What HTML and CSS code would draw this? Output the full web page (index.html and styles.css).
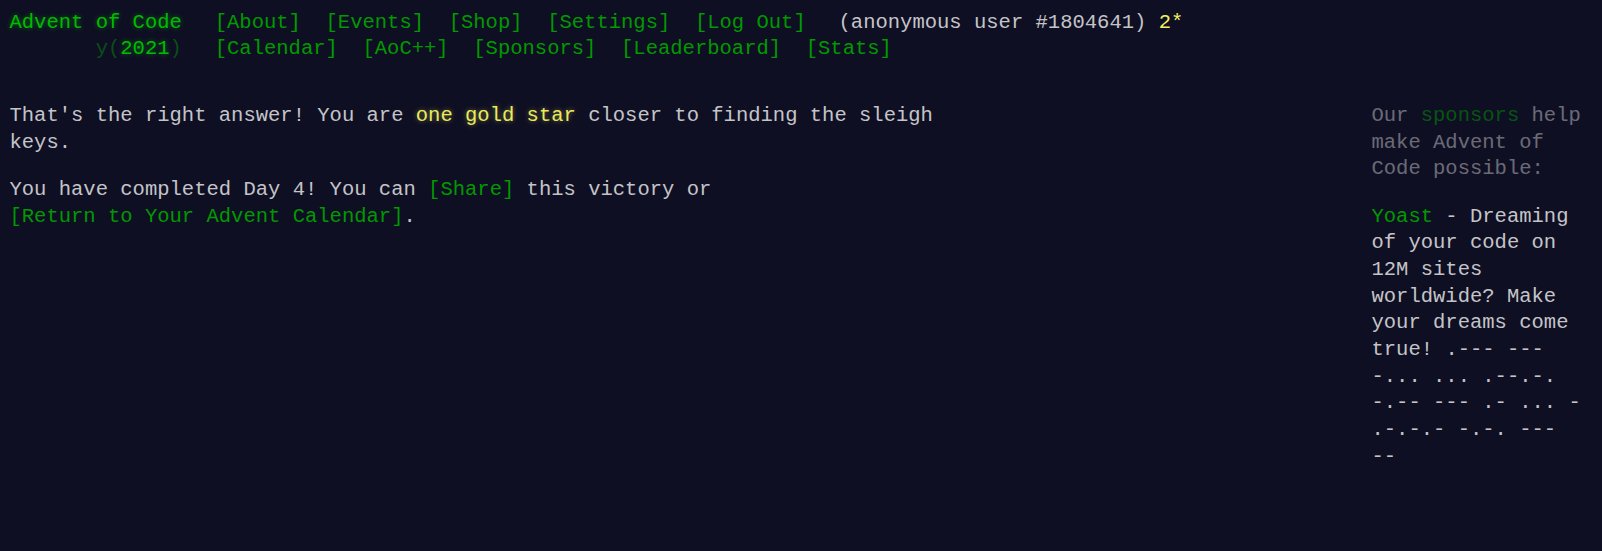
FILE: index.html
```html
<!DOCTYPE html>
<html lang="en">
<head>
<meta charset="utf-8">
<title>Day 4 - Advent of Code 2021</title>
<link rel="stylesheet" href="styles.css">
</head>
<body>
<header>
  <div class="row">
    <h1 class="title-global"><a href="#">Advent of Code</a></h1>
    <nav>
      <ul><li><a href="#">[About]</a></li><li><a href="#">[Events]</a></li><li><a href="#">[Shop]</a></li><li><a href="#">[Settings]</a></li><li><a href="#">[Log Out]</a></li></ul>
    </nav>
    <div class="user">(anonymous user #1804641) <span class="star-count">2*</span></div>
  </div>
  <div class="row">
    <h1 class="title-event">&nbsp;&nbsp;&nbsp;&nbsp;&nbsp;&nbsp;&nbsp;<span class="title-event-wrap">y(</span><a href="#">2021</a><span class="title-event-wrap">)</span></h1>
    <nav>
      <ul><li><a href="#">[Calendar]</a></li><li><a href="#">[AoC++]</a></li><li><a href="#">[Sponsors]</a></li><li><a href="#">[Leaderboard]</a></li><li><a href="#">[Stats]</a></li></ul>
    </nav>
  </div>
</header>
<main class="page">
  <article class="content">
    <p>That's the right answer! You are <span class="star">one gold star</span> closer to finding the sleigh keys.</p>
    <p>You have completed Day 4! You can <span class="share">[Share]</span> this victory or <a class="return" href="#">[Return to Your Advent Calendar]</a>.</p>
  </article>
  <aside class="sidebar">
    <div class="quiet">Our <a href="#">sponsors</a> help make Advent of Code possible:</div>
    <div class="sponsor"><a href="#">Yoast</a> - Dreaming of your code on 12M sites worldwide? Make your dreams come true! <span class="morse">.---</span> <span class="morse">---</span> <span class="morse">-...</span> <span class="morse">...</span> <span class="morse">.--.-.</span> <span class="morse">-.--</span> <span class="morse">---</span> <span class="morse">.-</span> <span class="morse">...</span> <span class="morse">-</span> <span class="morse">.-.-.-</span> <span class="morse">-.-.</span> <span class="morse">---</span> <span class="morse">--</span></div>
  </aside>
</main>
</body>
</html>
```
FILE: styles.css
```css
html, body {
  background: #0f0f23;
}

body {
  margin: 0;
  padding: 9.5px 9.5px;
  color: #c4c4c8;
  font-family: "Liberation Mono", "DejaVu Sans Mono", monospace;
  font-size: 20.53px;
  line-height: 26.7px;
}

a {
  color: #009900;
  text-decoration: none;
}

header {
  margin-bottom: 40px;
}

.row {
  display: flex;
  height: 26.7px;
}

h1 {
  margin: 0;
  font-size: 1em;
  font-weight: normal;
  padding-right: 1em;
  white-space: pre;
}

.title-global a,
.title-event a {
  color: #00bb00;
  font-weight: normal;
  text-shadow: 0 0 5px rgba(0, 204, 0, 0.5);
}

.title-event-wrap {
  color: #00cc00;
  opacity: 0.33;
}

nav ul {
  display: flex;
  list-style: none;
  margin: 0;
  padding: 0;
}

nav li {
  padding: 0 0.6em;
  white-space: pre;
}

.user {
  padding-left: 1em;
  white-space: pre;
}

.star-count {
  color: #f0f060;
}

.page {
  display: flex;
  justify-content: space-between;
  align-items: flex-start;
}

.content {
  width: 925px;
}

.content p {
  margin: 0 0 1em 0;
}

.star {
  color: #eaea5c;
  text-shadow: 0 0 5px rgba(255, 255, 102, 0.4);
}

.share {
  color: #009900;
}

.return {
  white-space: nowrap;
}

.sidebar {
  width: 221px;
}

.quiet {
  opacity: 0.5;
}

.sponsor {
  margin-top: 1em;
}

.morse {
  white-space: nowrap;
}
```
